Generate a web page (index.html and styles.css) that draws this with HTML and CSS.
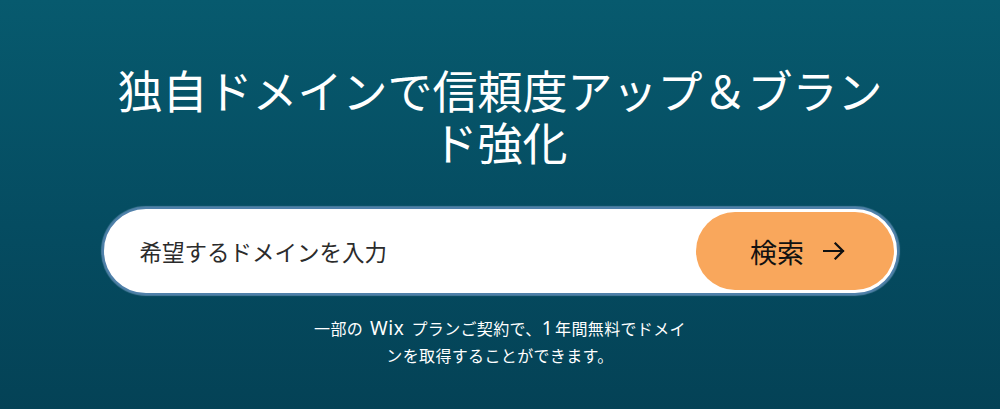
FILE: index.html
```html
<!DOCTYPE html>
<html lang="ja">
<head>
<meta charset="utf-8">
<link rel="stylesheet" href="styles.css">
</head>
<body>
<main class="hero">
  <h1 class="title">独自ドメインで信頼度アップ＆ブランド強化</h1>
  <form class="search">
    <span class="placeholder">希望するドメインを入力</span>
    <button type="button" class="btn">
      <span class="btn-label">検索</span>
      <svg class="arrow" width="22" height="18" viewBox="0 0 22 18" aria-hidden="true">
        <path d="M1 9 H20 M12.5 1.5 L20 9 L12.5 16.5" fill="none" stroke="#111" stroke-width="2.2" stroke-linecap="square"/>
      </svg>
    </button>
  </form>
  <p class="note">一部の <span class="latin">Wix</span> プランご契約で、<span class="latin num">1</span>年間無料でドメインを取得することができます。</p>
</main>
</body>
</html>
```
FILE: styles.css
```css
html, body {
  margin: 0;
  padding: 0;
}
body {
  width: 1000px;
  height: 409px;
  overflow: hidden;
  background: linear-gradient(180deg, #075a6e 0%, #054c61 55%, #044256 100%);
  font-family: "Noto Sans CJK JP", "Noto Sans", sans-serif;
  color: #fff;
}
.hero {
  display: flex;
  flex-direction: column;
  align-items: center;
  padding-top: 64px;
}
.title {
  margin: 0;
  max-width: 800px;
  font-size: 45px;
  font-weight: 400;
  line-height: 52px;
  text-align: center;
}
.search {
  margin-top: 39px;
  width: 797px;
  height: 88px;
  box-sizing: border-box;
  background: #fff;
  border-radius: 44px;
  border: 2px solid #4f80aa;
  box-shadow: 0 0 1px 1px rgba(120, 160, 200, 0.6);
  display: flex;
  align-items: center;
  justify-content: space-between;
  padding: 3px;
}
.placeholder {
  padding-left: 33px;
  font-size: 22.5px;
  color: #2b2b2b;
}
.btn {
  width: 198px;
  height: 78px;
  border: none;
  border-radius: 39px;
  background: #f9a75c;
  display: flex;
  align-items: center;
  justify-content: center;
  gap: 19px;
  padding: 0 0 0 6px;
  font-family: inherit;
  color: #111;
  cursor: pointer;
}
.btn-label {
  font-size: 27px;
  line-height: 1;
}
.arrow {
  display: block;
}
.note {
  margin: 20px 0 0;
  max-width: 382px;
  font-size: 16px;
  line-height: 27px;
  letter-spacing: 0.35px;
  word-spacing: 2px;
  text-align: center;
}
.latin {
  display: inline-block;
  font-family: "Noto Sans", sans-serif;
  font-size: 19px;
  line-height: 20px;
  letter-spacing: 0.6px;
  margin: 0 1px;
}
.num {
  margin: 0 2px 0 0;
}
```
